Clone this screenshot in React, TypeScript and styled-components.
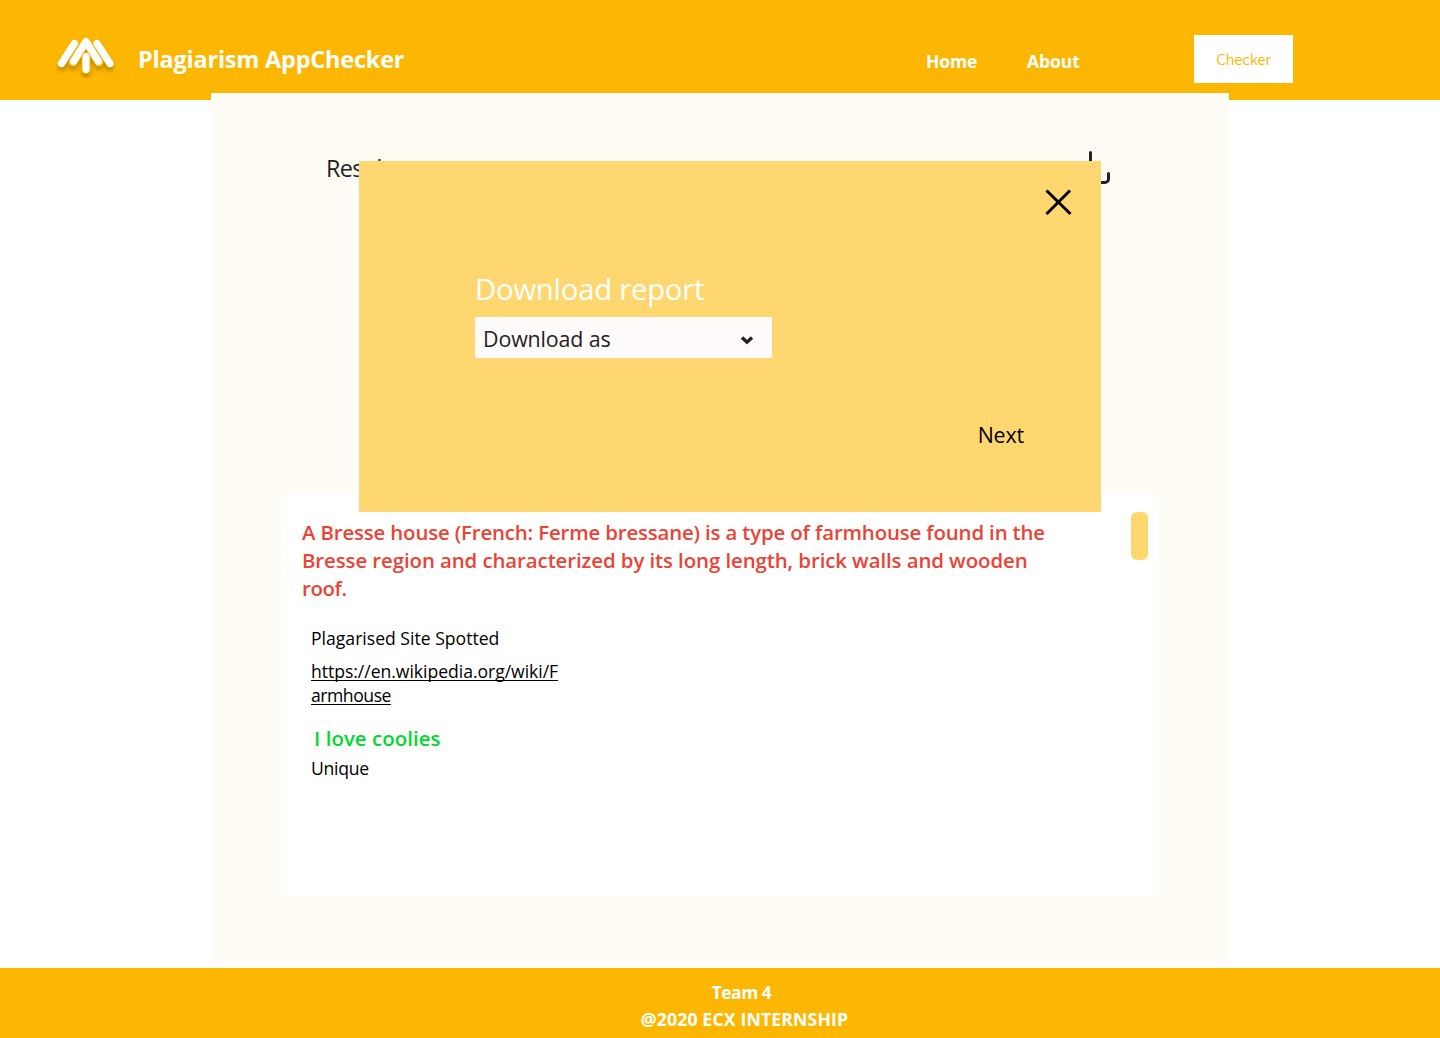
import React from "react";
import styled, { createGlobalStyle } from "styled-components";

const GlobalStyle = createGlobalStyle`
  *, *::before, *::after { box-sizing: border-box; }
  body { margin: 0; background: #fff; font-family: "Open Sans", "Noto Sans", sans-serif; }
  p, h1, h2 { margin: 0; }
  button { border: 0; padding: 0; background: none; font: inherit; cursor: pointer; }
`;

const Page = styled.div`
  display: flex;
  flex-direction: column;
  height: 1038px;
  overflow: hidden;
`;

const Header = styled.header`
  display: flex;
  align-items: flex-start;
  flex: none;
  height: 100px;
  padding-left: 54px;
  background: #fdb702;
`;

const Logo = styled.svg`
  flex: none;
  width: 64px;
  height: 54px;
  margin-top: 32px;
`;

const Line = styled.p<{ $size: number; $leading: number; $weight?: number; $color?: string; $spacing?: number }>`
  font-size: ${(p) => p.$size}px;
  line-height: ${(p) => p.$leading}px;
  font-weight: ${(p) => p.$weight ?? 400};
  color: ${(p) => p.$color ?? "#000"};
  letter-spacing: ${(p) => p.$spacing ?? 0}px;
  white-space: nowrap;
`;

const Tracked = styled.span<{ $spacing: number }>`
  letter-spacing: ${(p) => p.$spacing}px;
`;

const Brand = styled(Line)`
  width: 788px;
  margin: 43px 0 0 20px;
`;

const Nav = styled.nav`
  display: flex;
  width: 268px;
  margin-top: 49px;
`;

const NavItem = styled(Line)`
  width: 101px;
`;

const CheckerButton = styled.button`
  width: 99px;
  height: 48px;
  margin-top: 35px;
  background: #fff;
  color: #fdb702;
  font-family: "Noto Sans CJK JP", sans-serif;
  font-size: 15px;
  font-weight: 350;
  line-height: 48px;
  letter-spacing: -0.2px;
`;

const Main = styled.main`
  position: relative;
  display: flex;
  flex-direction: column;
  flex: none;
  width: 1018px;
  height: 868px;
  margin: -7px 0 7px 211px;
  padding: 56px 72px 65px 72px;
  background: #fffcf5;
`;

const ResultBar = styled.div`
  display: flex;
  justify-content: space-between;
  height: 345px;
  padding: 0 45px 0 43px;
`;

const DownloadIcon = styled.svg`
  width: 42px;
  height: 42px;
`;

const Report = styled.section`
  display: flex;
  justify-content: space-between;
  height: 402px;
  padding: 18px 9px 0 19px;
  background: #fff;
`;

const Findings = styled.div`
  display: flex;
  flex-direction: column;
  padding-top: 6px;
`;

const Indented = styled.div<{ $top: number; $left: number }>`
  padding: ${(p) => p.$top}px 0 0 ${(p) => p.$left}px;
`;

const SiteLink = styled.a`
  color: inherit;
  text-decoration: underline;
  text-decoration-thickness: 1px;
  text-underline-offset: 2px;
  text-decoration-skip-ink: none;
`;

const ScrollThumb = styled.div`
  width: 17px;
  height: 48px;
  border-radius: 6px;
  background: #ffd770;
`;

const Modal = styled.div`
  position: absolute;
  top: 68px;
  left: 148px;
  display: flex;
  flex-direction: column;
  width: 742px;
  height: 351px;
  padding: 28px 29px 0 116px;
  background: #ffd770;
`;

const CloseButton = styled.button`
  align-self: flex-end;
  width: 28px;
  height: 28px;
  svg { display: block; }
`;

const Select = styled.button`
  display: flex;
  align-items: center;
  justify-content: space-between;
  width: 297px;
  height: 41px;
  margin-top: 8px;
  padding: 3px 18px 0 8px;
  background: #fffbfb;
`;

const Chevron = styled.svg`
  margin-top: 1px;
`;

const NextButton = styled.button`
  align-self: flex-end;
  margin: 62px 48px 0 0;
`;

const Footer = styled.footer`
  display: flex;
  flex-direction: column;
  align-items: center;
  flex: none;
  height: 70px;
  padding: 11px 0 0 49px;
  background: #fdb702;
`;

const FooterTop = styled(Line)`
  margin-right: 6px;
`;

export default function App() {
  return (
    <>
      <GlobalStyle />
      <Page>
        <Header>
          <Logo viewBox="0 0 64 54" fill="none">
            <defs>
              <filter id="logoShadow" x="-20%" y="-20%" width="140%" height="150%">
                <feDropShadow dx="0" dy="4" stdDeviation="2" floodColor="#000" floodOpacity="0.25" />
              </filter>
            </defs>
            <g filter="url(#logoShadow)" strokeLinecap="round" strokeLinejoin="round" strokeWidth="7.2">
              <path d="M20.500 11.500L7.500 31.500M43 11.500L56 31.500" stroke="#fff" />
              <path d="M19 30L32 9.500L45 30" stroke="#fdb702" strokeWidth="8.6" />
              <path d="M19.500 29.500L32 9.500L44.500 29.500" stroke="#fff" />
              <path d="M32 24.500V37.500" stroke="#fdb702" strokeWidth="8.4" />
              <path d="M32 24.500V37.500" stroke="#fff" strokeWidth="7" />
            </g>
          </Logo>
          <Brand as="h1" $size={23.5} $leading={33} $weight={700} $color="#fff" $spacing={-0.22}>Plagiarism AppChecker</Brand>
          <Nav>
            <NavItem $size={17.6} $leading={25} $weight={700} $color="#fff" $spacing={-0.2}>Home</NavItem>
            <NavItem $size={17.6} $leading={25} $weight={700} $color="#fff" $spacing={-0.1}>About</NavItem>
          </Nav>
          <CheckerButton>Checker</CheckerButton>
        </Header>

        <Main>
          <ResultBar>
            <Line as="h2" $size={23.4} $leading={38} $color="#222" $spacing={-0.65}>Result</Line>
            <DownloadIcon viewBox="0 0 42 42" fill="none" stroke="#222" strokeWidth="3" strokeLinecap="round" strokeLinejoin="round">
              <path d="M20.500 3.500V25M12 17L20.500 25L29 17M2 25V30A3.500 3.500 0 0 0 5.500 33.500H35A3.500 3.500 0 0 0 38.500 30V24.500" />
            </DownloadIcon>
          </ResultBar>

          <Report>
            <Findings>
              <Line $size={20.4} $leading={28} $weight={600} $color="#eb4335" $spacing={-0.15}>
                A Bresse house (French: Ferme bressane) is a type of farmhouse found in the<br />
                <Tracked $spacing={-0.08}>Bresse region and characterized by its long length, brick walls and wooden</Tracked><br />
                <Tracked $spacing={-0.4}>roof.</Tracked>
              </Line>
              <Indented $top={24} $left={9}>
                <Line $size={17.6} $leading={24}>Plagarised Site Spotted</Line>
              </Indented>
              <Indented $top={9} $left={9}>
                <Line $size={17.6} $leading={24} $spacing={-0.04}>
                  <SiteLink>https://en.wikipedia.org/wiki/F<br /><Tracked $spacing={-0.46}>armhouse</Tracked></SiteLink>
                </Line>
              </Indented>
              <Indented $top={17} $left={12}>
                <Line $size={20.4} $leading={28} $weight={600} $color="#00d930" $spacing={0.06}>I love coolies</Line>
              </Indented>
              <Indented $top={4} $left={9}>
                <Line $size={17.6} $leading={24} $spacing={-0.25}>Unique</Line>
              </Indented>
            </Findings>
            <ScrollThumb />
          </Report>

          <Modal>
            <CloseButton aria-label="Close">
              <svg width="28" height="28" viewBox="0 0 28 28" fill="none" stroke="#000" strokeWidth="3">
                <path d="M2.500 1.500L26.500 25M26 1.500L2.500 25" />
              </svg>
            </CloseButton>
            <Indented $top={52} $left={0}>
              <Line as="h2" $size={29.3} $leading={40} $color="#fff" $spacing={-0.24}>Download report</Line>
            </Indented>
            <Select>
              <Line as="span" $size={21.4} $leading={30} $color="#222" $spacing={-0.13}>Download as</Line>
              <Chevron width="14" height="10" viewBox="0 0 14 10" fill="none" stroke="#222" strokeWidth="3.4">
                <path d="M2 2.500L7 7.200L12 2.500" />
              </Chevron>
            </Select>
            <NextButton>
              <Line as="span" $size={21.4} $leading={30} $spacing={-0.15}>Next</Line>
            </NextButton>
          </Modal>
        </Main>

        <Footer>
          <FooterTop $size={17.4} $leading={27} $weight={700} $color="#fff" $spacing={-0.45}>Team 4</FooterTop>
          <Line $size={17.7} $leading={27} $weight={700} $color="#fff" $spacing={0.12}>@2020 ECX INTERNSHIP</Line>
        </Footer>
      </Page>
    </>
  );
}
